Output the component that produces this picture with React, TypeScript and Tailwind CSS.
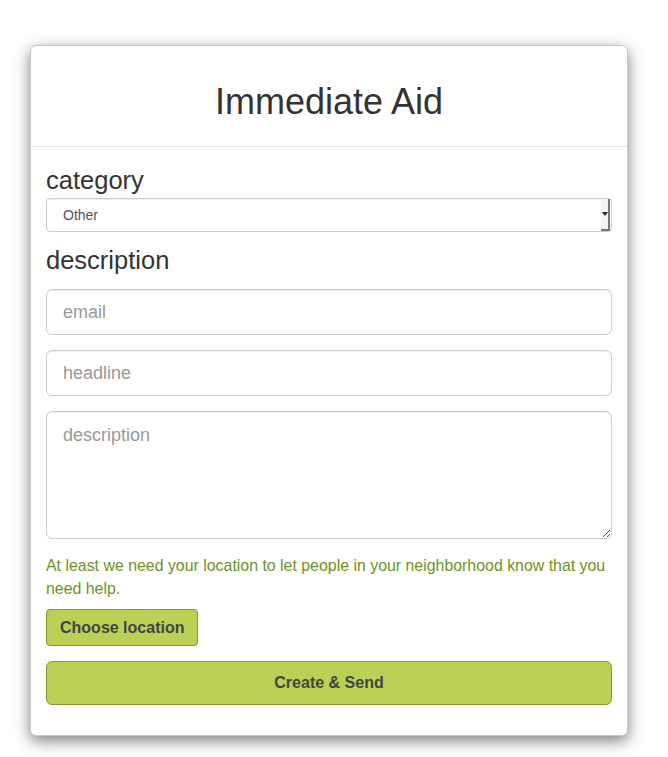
import React from "react";

// ─── 폼 필드 ────────────────────────────────────────────────────────────────

/** 큰 입력창 공통 클래스 */
const inputClass =
  "block w-full rounded-[6px] border border-[#cccccc] bg-white px-4 text-[18px] text-[#555] placeholder:text-[#999] outline-none shadow-[inset_0_1px_1px_rgba(0,0,0,0.075)]";

/** 카테고리 선택 (네이티브 select 모양 흉내) */
function CategorySelect() {
  return (
    <div className="flex h-[34px] w-[566px] items-center rounded-[4px] border border-[#cccccc] bg-white shadow-[inset_0_1px_1px_rgba(0,0,0,0.075)]">
      <span className="flex-1 pl-4 text-[14px] text-[#555]">Other</span>
      <div className="mr-[1px] flex h-[32px] w-[9px] items-center justify-center border-r-2 border-b-2 border-[#777] bg-[#f4f4f4]">
        <div className="h-0 w-0 border-x-[3px] border-t-[4px] border-x-transparent border-t-[#222]" />
      </div>
    </div>
  );
}

// ─── 메인 ───────────────────────────────────────────────────────────────────

export default function App() {
  return (
    <div
      className="min-h-[757px] bg-white pt-[45px]"
      style={{ fontFamily: '"Liberation Sans", Arial, sans-serif' }}
    >
      <div className="ml-[30px] w-[598px] rounded-[6px] border border-[#c8c8c8] bg-white shadow-[0_5px_15px_rgba(0,0,0,0.5)]">
        {/* 헤더 */}
        <div className="flex h-[101px] items-center justify-center border-b border-[#e5e5e5] pt-[12px]">
          <h1 className="text-[36px] leading-none text-[#333]">Immediate Aid</h1>
        </div>

        {/* 본문 */}
        <div className="px-[15px] pt-[20px] pb-[30px]">
          <label className="block text-[25.5px] leading-[26px] text-[#333]">category</label>
          <div className="mt-[5px]">
            <CategorySelect />
          </div>

          <label className="mt-[15px] block text-[25.5px] leading-[26px] text-[#333]">
            description
          </label>

          <div className="mt-[16px] flex flex-col gap-[15px]">
            <input className={`${inputClass} h-[46px]`} placeholder="email" />
            <input className={`${inputClass} h-[46px]`} placeholder="headline" />
            <textarea
              className={`${inputClass} h-[128px] resize-y pt-[10px]`}
              placeholder="description"
            />
          </div>

          <p className="mt-[15px] text-[15.9px] leading-[23px] text-[#6b9422]">
            At least we need your location to let people in your neighborhood know that you need
            help.
          </p>

          <button className="mt-[9px] h-[37px] rounded-[4px] border border-[#7c9b2c] bg-[#bbd155] px-[13px] text-[16px] font-bold text-[#444]">
            Choose location
          </button>

          <button className="mt-[15px] block h-[44px] w-full rounded-[6px] border border-[#7c9b2c] bg-[#bbd155] text-[16px] font-bold text-[#444]">
            Create &amp; Send
          </button>
        </div>
      </div>
    </div>
  );
}
